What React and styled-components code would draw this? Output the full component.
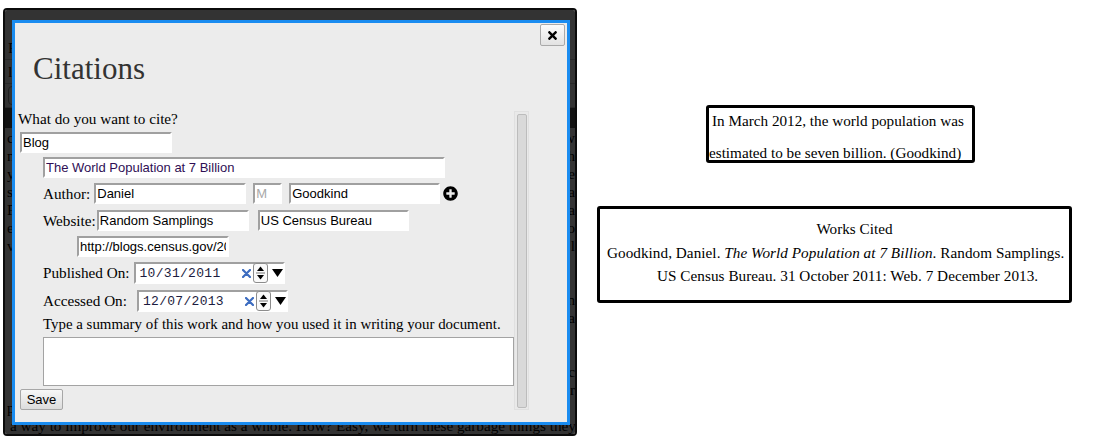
import styled, { createGlobalStyle } from 'styled-components';
import { FaTimes, FaPlusCircle } from 'react-icons/fa';

const GlobalStyle = createGlobalStyle`
  body {
    margin: 0;
    background: #fff;
    font-family: "Liberation Serif", "Times New Roman", serif;
  }
`;

const Page = styled.div`
  width: 1100px;
  height: 442px;
  display: flex;
  align-items: flex-start;
`;

/* underlying document, dimmed by the modal overlay */
const Stage = styled.div`
  position: relative;
  margin: 8px 0 0 3px;
  width: 574px;
  height: 428px;
  box-sizing: border-box;
  border: 2px solid #0b0b0b;
  border-radius: 4px;
  overflow: hidden;
  background: #fff;
`;

const Doc = styled.div`
  font-size: 15.2px;
  color: #000;
`;

const DocTop = styled.div`
  height: 26px;
`;

const DocRow = styled.div`
  height: 24px;
  box-sizing: border-box;
  border-bottom: 1px solid #c8c8c8;
  padding-left: 3px;
  line-height: 23px;
  display: flex;
  align-items: center;
`;

const DocSearch = styled.div`
  width: 200px;
  height: 17px;
  border: 1px solid #999;
  border-radius: 4px;
`;

const DocBand = styled.div`
  height: 20px;
  background: #5a5a5a;
`;

const DocBody = styled.div`
  padding: 1px 0 0 2px;
`;

const DocLine = styled.div`
  height: 18px;
  line-height: 18px;
  display: flex;
  justify-content: space-between;
  white-space: nowrap;
`;

const DocLastLine = styled.div`
  line-height: 18px;
  padding-left: 3px;
  white-space: nowrap;
`;

const Overlay = styled.div`
  position: absolute;
  inset: 0;
  background: rgba(0, 0, 0, 0.8);
`;

const Dialog = styled.div`
  position: absolute;
  left: 7px;
  top: 10px;
  width: 558px;
  height: 405px;
  box-sizing: border-box;
  border: 3px solid #1a8cf0;
  background: #ececec;
  display: flex;
  flex-direction: column;
`;

const DialogBar = styled.div`
  display: flex;
  justify-content: flex-end;
  padding: 1px 2px 0 0;
`;

const CloseButton = styled.button`
  width: 25px;
  height: 22px;
  box-sizing: border-box;
  padding: 0;
  border: 1px solid #a9a9a9;
  border-radius: 2px;
  background: linear-gradient(#fbfbfb, #e2e2e2);
  display: flex;
  align-items: center;
  justify-content: center;
  color: #000;
`;

const Title = styled.h1`
  margin: 5px 0 0 18px;
  font-size: 31px;
  line-height: 36px;
  font-weight: normal;
  color: #333;
`;

const Form = styled.div`
  margin: 23px 0 0 3px;
  height: 300px;
  display: flex;
`;

const FormBody = styled.div`
  width: 496px;
  display: flex;
  flex-direction: column;
  align-items: flex-start;
`;

const Text = styled.div`
  font-size: ${(p) => p.$size || 15.2}px;
  line-height: 18px;
  color: #000;
  margin-top: ${(p) => p.$mt || 0}px;
`;

const Group = styled.div`
  margin-left: 25px;
  display: flex;
  flex-direction: column;
  align-items: flex-start;
`;

const Row = styled.div`
  display: flex;
  align-items: center;
  margin-top: ${(p) => p.$mt || 0}px;
  margin-left: ${(p) => p.$ml || 0}px;
`;

const Label = styled.span`
  font-size: 15.2px;
  line-height: 18px;
  color: #000;
  margin-right: ${(p) => p.$gap || 0}px;
`;

const Input = styled.input`
  box-sizing: border-box;
  width: ${(p) => p.$w}px;
  height: 21px;
  margin: 0 ${(p) => p.$gap || 0}px 0 0;
  padding: 0 1px;
  border: 2px solid;
  border-color: #a0a0a0 #fff #fff #a0a0a0;
  background: #fff;
  font: 13px "Liberation Sans", Arial, sans-serif;
  color: ${(p) => p.$color || '#000'};
  outline: none;

  &::placeholder {
    color: #a8a8a8;
  }
`;

const DateField = styled.div`
  box-sizing: border-box;
  width: 151px;
  height: 22px;
  border: 2px solid;
  border-color: #a0a0a0 #fff #fff #a0a0a0;
  background: #fff;
  display: flex;
  align-items: center;
  padding-left: 4px;
`;

const DateText = styled.span`
  font: 13px "Liberation Mono", "Courier New", monospace;
  letter-spacing: 0.3px;
  color: #1c1c40;
  flex: 1;
`;

const Spinner = styled.div`
  width: 15px;
  height: 20px;
  box-sizing: border-box;
  border: 1px solid #8c8c8c;
  border-radius: 3px;
  background: #fafafa;
  margin: 0 4px 0 2px;
  display: flex;
  align-items: center;
  justify-content: center;
`;

const Summary = styled.textarea`
  box-sizing: border-box;
  width: 471px;
  height: 49px;
  margin: 4px 0 0;
  border: 1px solid #a3a3a3;
  background: #fff;
  resize: none;
  outline: none;
`;

const SaveButton = styled.button`
  width: 43px;
  height: 21px;
  margin: 3px 0 0 2px;
  padding: 0;
  border: 1px solid #a7a7a7;
  border-radius: 2px;
  background: linear-gradient(#f7f7f7, #dcdcdc);
  font: 13px "Liberation Sans", Arial, sans-serif;
  color: #000;
`;

const Track = styled.div`
  width: 15px;
  height: 299px;
  margin-top: 1px;
  box-sizing: border-box;
  border: 1px solid #e0e0e0;
  background: #e9e9e9;
  padding: 2px 1px 1px 2px;
`;

const Thumb = styled.div`
  height: 100%;
  box-sizing: border-box;
  border: 1px solid #bcbcbc;
  border-radius: 2px;
  background: #d9d9d9;
`;

const RightColumn = styled.div`
  margin-left: 20px;
  padding-top: 105px;
  display: flex;
  flex-direction: column;
  align-items: flex-start;
  font-size: 15.2px;
  color: #000;
`;

const QuoteBox = styled.div`
  margin-left: 109px;
  width: 269px;
  height: 58px;
  box-sizing: border-box;
  border: 3px solid #000;
  border-radius: 3px;
`;

const QuoteText = styled.p`
  margin: -3px 0 0;
  line-height: 32px;
  text-indent: 3px;
  white-space: nowrap;
`;

const CitedBox = styled.div`
  margin-top: 43px;
  width: 475px;
  height: 97px;
  box-sizing: border-box;
  border: 3px solid #000;
  border-radius: 3px;
  padding: 8px 0 0 7px;
  line-height: 23.5px;
`;

const CitedHeading = styled.div`
  text-align: center;
  padding-left: 33px;
`;

const CitedEntry = styled.div`
  padding-left: 50px;
  text-indent: -50px;
  white-space: nowrap;
  letter-spacing: 0.05px;
`;

// only the slivers of the page that show beside the dialog
const docLines = [
  ['co', 'w'],
  ['na', 'h'],
  ['y', 'e'],
  ['s', 'a'],
  ['P', 'a'],
  ['e', 'o'],
  ['va', 'l'],
  ['', ''],
  ['', ''],
  ['', 'n'],
  ['', 'a'],
  ['', ''],
  ['', ''],
  ['', 'c'],
  ['', 'r'],
  ['pa', ''],
];

function ClearIcon() {
  return (
    <svg width="9" height="9" viewBox="0 0 9 9">
      <path d="M1 1 L8 8 M8 1 L1 8" stroke="#3c6cc0" strokeWidth="2.2" strokeLinecap="round" />
    </svg>
  );
}

function SpinIcon() {
  return (
    <svg width="9" height="16" viewBox="0 0 9 16">
      <path d="M4.5 1.5 L8 6 L1 6 Z" fill="#000" />
      <path d="M0 8 H9" stroke="#777" strokeWidth="1" />
      <path d="M1 10 L8 10 L4.5 14.5 Z" fill="#000" />
    </svg>
  );
}

function DropIcon() {
  return (
    <svg width="11" height="8" viewBox="0 0 11 8">
      <path d="M0 0 H11 L5.5 8 Z" fill="#000" />
    </svg>
  );
}

function DateInput({ value }) {
  return (
    <DateField>
      <DateText>{value}</DateText>
      <ClearIcon />
      <Spinner>
        <SpinIcon />
      </Spinner>
      <DropIcon />
    </DateField>
  );
}

function CitationDialog() {
  return (
    <Dialog>
      <DialogBar>
        <CloseButton type="button">
          <FaTimes size={13} />
        </CloseButton>
      </DialogBar>
      <Title>Citations</Title>

      <Form>
        <FormBody>
          <Text>What do you want to cite?</Text>
          <Row $mt={4} $ml={2}>
            <Input $w={152} readOnly value="Blog" />
          </Row>

          <Group>
            <Row $mt={4}>
              <Input $w={402} $color="#2f0f55" readOnly value="The World Population at 7 Billion" />
            </Row>

            <Row $mt={5}>
              <Label $gap={4}>Author:</Label>
              <Input $w={152} $gap={7} readOnly value="Daniel" />
              <Input $w={29} $gap={7} readOnly placeholder="M" />
              <Input $w={151} $gap={3} readOnly value="Goodkind" />
              <FaPlusCircle size={15} color="#000" />
            </Row>

            <Row $mt={6}>
              <Label $gap={1}>Website:</Label>
              <Input $w={152} $gap={9} readOnly value="Random Samplings" />
              <Input $w={151} readOnly value="US Census Bureau" />
            </Row>

            <Row $mt={5} $ml={34}>
              <Input $w={152} readOnly value="http://blogs.census.gov/2011/10/31/the-world-population-at-7-billion/" />
            </Row>

            <Row $mt={5}>
              <Label $gap={4}>Published On:</Label>
              <DateInput value="10/31/2011" />
            </Row>

            <Row $mt={6}>
              <Label $gap={10}>Accessed On:</Label>
              <DateInput value="12/07/2013" />
            </Row>

            <Text $mt={3} $size={14.9}>
              Type a summary of this work and how you used it in writing your document.
            </Text>
            <Summary readOnly />
          </Group>

          <SaveButton type="button">Save</SaveButton>
        </FormBody>

        <Track>
          <Thumb />
        </Track>
      </Form>
    </Dialog>
  );
}

export default function App() {
  return (
    <>
      <GlobalStyle />
      <Page>
        <Stage>
          <Doc>
            <DocTop />
            <DocRow>R</DocRow>
            <DocRow>lo</DocRow>
            <DocRow>
              <DocSearch />
            </DocRow>
            <DocBand />
            <DocBody>
              {docLines.map(([left, right], i) => (
                <DocLine key={i}>
                  <span>{left}</span>
                  <span>{right}</span>
                </DocLine>
              ))}
              <DocLastLine>
                a way to improve our environment as a whole. How? Easy, we turn these garbage things they f
              </DocLastLine>
            </DocBody>
          </Doc>
          <Overlay />
          <CitationDialog />
        </Stage>

        <RightColumn>
          <QuoteBox>
            <QuoteText>
              In March 2012, the world population was
              <br />
              estimated to be seven billion. (Goodkind)
            </QuoteText>
          </QuoteBox>

          <CitedBox>
            <CitedHeading>Works Cited</CitedHeading>
            <CitedEntry>
              Goodkind, Daniel. <i>The World Population at 7 Billion</i>. Random Samplings.
              <br />
              US Census Bureau. 31 October 2011: Web. 7 December 2013.
            </CitedEntry>
          </CitedBox>
        </RightColumn>
      </Page>
    </>
  );
}
